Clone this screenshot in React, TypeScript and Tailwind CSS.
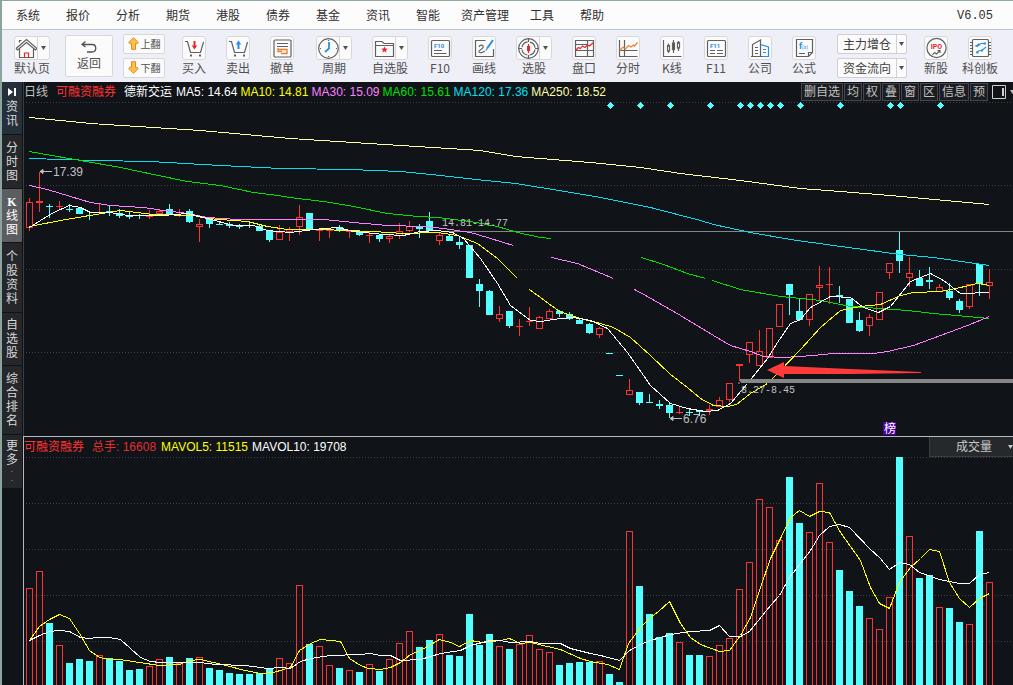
import { ReactNode } from 'react'

type Dir = 'r' | 'c'
// direction, high, body top, body bottom, low, volume top
type Bar = [Dir, number, number, number, number, number]

const RED = '#ff3232'
const CYAN = '#54ffff'

const bars: Bar[] = [
    ['r', 198, 202, 228, 231, 588], ['r', 172, 201, 203, 212, 571], ['c', 204, 206, 207, 218, 623], ['r', 201, 206, 207, 209, 645],
    ['c', 204, 209, 210, 212, 663], ['c', 208, 208, 214, 214, 659], ['c', 212, 215, 216, 220, 661], ['r', 203, 212, 213, 213, 655],
    ['c', 205, 211, 213, 216, 658], ['c', 209, 213, 216, 218, 661], ['c', 212, 215, 217, 219, 670], ['c', 214, 215, 216, 219, 669],
    ['r', 210, 216, 217, 219, 666], ['r', 209, 211, 214, 214, 659], ['c', 204, 209, 214, 214, 657], ['r', 209, 212, 213, 217, 663],
    ['c', 209, 211, 222, 223, 658], ['r', 219, 224, 227, 242, 657], ['c', 219, 219, 224, 228, 668], ['c', 222, 224, 225, 225, 670],
    ['c', 222, 224, 226, 228, 673], ['c', 224, 226, 227, 229, 674], ['c', 223, 225, 226, 228, 674], ['c', 224, 226, 231, 231, 673],
    ['c', 231, 231, 240, 242, 668], ['r', 225, 232, 240, 240, 658], ['r', 227, 229, 232, 241, 663], ['r', 205, 217, 227, 235, 585],
    ['c', 213, 213, 229, 229, 644], ['r', 229, 230, 231, 241, 646], ['r', 230, 230, 231, 238, 665], ['c', 225, 227, 231, 232, 668],
    ['r', 231, 231, 232, 238, 670], ['c', 231, 231, 235, 236, 672], ['r', 232, 235, 236, 243, 664], ['c', 235, 235, 239, 242, 671],
    ['r', 235, 236, 239, 243, 659], ['r', 223, 231, 236, 239, 643], ['r', 221, 226, 231, 232, 631], ['c', 224, 227, 229, 238, 647],
    ['c', 212, 221, 231, 231, 640], ['r', 233, 235, 241, 245, 634], ['c', 234, 236, 241, 241, 655], ['c', 236, 242, 245, 249, 656],
    ['c', 245, 245, 278, 278, 614], ['c', 279, 284, 291, 307, 645], ['c', 290, 291, 315, 315, 634], ['r', 306, 314, 319, 322, 646],
    ['c', 311, 311, 326, 328, 649], ['r', 319, 326, 327, 336, 644], ['r', 307, 321, 322, 326, 635], ['r', 316, 317, 329, 329, 649],
    ['r', 309, 311, 319, 319, 652], ['c', 310, 311, 314, 317, 665], ['c', 312, 314, 319, 320, 663], ['c', 318, 320, 324, 324, 662],
    ['c', 323, 324, 333, 334, 662], ['r', 327, 328, 335, 338, 661], ['c', 353, 353, 354, 354, 674], ['c', 375, 375, 376, 376, 682],
    ['r', 379, 390, 395, 395, 531], ['c', 392, 392, 403, 405, 586], ['c', 394, 402, 403, 403, 614], ['c', 400, 404, 406, 409, 637],
    ['c', 403, 405, 413, 418, 633], ['r', 407, 412, 413, 414, 642], ['c', 409, 412, 413, 416, 655], ['c', 410, 410, 412, 416, 655],
    ['r', 405, 409, 411, 415, 656], ['r', 397, 400, 407, 407, 645], ['r', 383, 383, 400, 402, 638], ['r', 364, 364, 366, 382, 589],
    ['r', 342, 342, 355, 363, 562], ['r', 330, 351, 366, 366, 499], ['r', 328, 328, 358, 358, 507], ['r', 304, 304, 327, 327, 540],
    ['c', 284, 284, 295, 315, 477], ['c', 299, 311, 320, 321, 523], ['r', 294, 294, 320, 326, 532], ['r', 266, 285, 288, 300, 483],
    ['r', 267, 284, 285, 304, 542], ['c', 286, 295, 297, 303, 570], ['c', 299, 299, 323, 323, 591], ['c', 312, 320, 331, 332, 606],
    ['r', 314, 317, 326, 336, 618], ['r', 292, 292, 320, 320, 629], ['r', 263, 263, 273, 279, 597], ['c', 232, 250, 261, 273, 457],
    ['r', 257, 273, 278, 287, 536], ['c', 270, 278, 286, 286, 578], ['c', 267, 280, 282, 289, 575], ['r', 284, 287, 292, 292, 607],
    ['c', 283, 291, 298, 300, 608], ['c', 299, 301, 310, 313, 622], ['r', 284, 284, 307, 309, 624], ['c', 264, 264, 284, 296, 531],
    ['r', 269, 282, 286, 299, 582],
]

const priceLines: { color: string; points: string }[] = [
    { color: '#ffffa8', points: '29,117 60,120 90,123 200,130 290,138 400,145 480,150 515,156 590,162 640,167 680,173 740,180 800,188 840,191 890,195 989,204' },
    { color: '#00e0f0', points: '29,158 95,160 150,161 220,165 280,168 350,169 400,171 440,175 485,180 515,183 540,187 600,197 650,207 700,220 713,224 750,232 790,239 833,245 900,254 933,257 989,265' },
    { color: '#00e000', points: '29,151 40,153 80,160 120,167 153,174 187,181 220,185 253,192 270,194 297,198 323,201 353,206 387,213 417,216 437,217 470,221 497,226 517,232 540,237 551,238' },
    { color: '#00e000', points: '641,257 663,264 687,273 705,278' },
    { color: '#00e000', points: '712,280 740,289 780,296 820,300 850,306 880,308 907,310 933,313 967,316 989,318' },
    { color: '#ff80ff', points: '29,185 47,189 70,196 90,202 110,205 143,207 163,210 187,213 207,217 237,219 323,219 353,222 387,225 423,226 443,228 470,232 487,237 503,242 513,245' },
    { color: '#ff80ff', points: '551,257 577,263 613,278' },
    { color: '#ff80ff', points: '634,289 647,296 680,315 713,335 730,345 750,351 763,356 783,357 813,355 833,353 873,353 887,351 913,345 940,335 967,325 989,316' },
    { color: '#ffff00', points: '29,226 60,220 90,215 120,210 153,214 193,215 207,218 220,219 247,221 267,226 287,229 320,229 373,231 403,233 437,232 457,235 477,243 497,258 517,278' },
    { color: '#ffff00', points: '529,289 559,311 580,318 600,323 613,327 630,337 650,355 670,374 687,387 700,398 713,405 727,406 736,404 750,393 767,383 780,370 800,349 820,327 840,310 860,306 880,304 900,295 913,292 940,291 960,287 977,283 989,285' },
    { color: '#ffffff', points: '29,227 40,220 53,212 69,205 80,207 90,212 110,212 127,215 163,215 187,213 207,218 233,225 253,225 267,230 290,232 313,229 337,227 353,231 383,234 403,235 420,231 437,230 452,232 463,238 480,258 497,283 510,305 530,320 540,321 560,318 573,317 590,320 607,328 627,352 650,385 670,403 687,408 705,411 717,410 730,403 747,383 767,358 777,342 790,323 800,319 810,307 830,296 850,297 863,307 878,312 890,306 910,281 930,273 943,280 960,293 989,292' },
]

const volumeLines = [
    { color: '#ffff00', points: '29,640 39,626 49,619 59,614 69,618 79,633 89,650 99,657 109,659 119,659 139,662 159,665 179,664 189,660 200,659 213,662 230,666 240,669 260,673 273,672 290,667 299,650 310,643 320,639 340,641 349,658 360,665 368,668 380,669 390,667 400,662 410,654 420,650 439,639 450,642 459,646 470,640 482,642 500,640 509,638 520,643 530,642 547,646 560,649 580,658 590,661 607,664 619,669 628,643 640,627 650,617 658,611 669,601 680,623 690,637 700,644 719,651 729,650 740,635 750,617 760,587 770,558 780,538 790,517 799,510 809,516 819,511 829,512 840,532 860,560 870,587 879,603 889,608 899,582 910,567 920,558 929,549 939,551 949,582 959,598 969,607 979,598 989,593' },
    { color: '#ffffff', points: '29,640 39,635 49,631 59,630 69,631 80,637 89,638 96,637 109,637 120,639 130,648 140,657 150,661 160,662 200,662 215,664 245,665 267,668 280,667 290,668 300,661 310,658 330,655 360,654 370,653 380,655 390,655 400,660 420,659 440,653 460,650 470,645 490,640 500,640 510,642 530,641 540,643 560,643 570,648 590,653 600,655 619,660 629,650 640,644 650,640 670,634 690,631 709,630 719,625 729,636 740,636 749,631 770,605 779,595 789,577 810,550 819,535 829,526 839,524 849,527 870,549 879,557 889,569 899,562 909,564 919,572 939,579 959,583 969,583 979,574 989,572' },
]

const diamonds = [610, 640, 670, 710, 740, 750, 760, 770, 780, 800, 840, 890, 900, 940]

const menus = ['系统', '报价', '分析', '期货', '港股', '债券', '基金', '资讯', '智能', '资产管理', '工具', '帮助']

const indicators = [
    { text: 'MA5: 14.64', color: 'text-white' },
    { text: 'MA10: 14.81', color: 'text-[#ffff00]' },
    { text: 'MA30: 15.09', color: 'text-[#ff80ff]' },
    { text: 'MA60: 15.61', color: 'text-[#00e000]' },
    { text: 'MA120: 17.36', color: 'text-[#00e0f0]' },
    { text: 'MA250: 18.52', color: 'text-[#ffffa8]' },
]

const sideTabs = [
    { text: '资讯', className: 'h-[52px] bg-[#26303b]', skip: true },
    { text: '分时图', className: 'h-[53px] bg-[#26272b]' },
    { text: 'K线图', className: "h-[53px] bg-[#5c5d61] text-white font-['Liberation_Serif','Noto_Sans_CJK_SC',serif]" },
    { text: '个股资料', className: 'h-[69px] bg-[#26272b]' },
    { text: '自选股', className: 'h-[52px] bg-[#26272b]' },
    { text: '综合排名', className: 'h-[68px] bg-[#26272b]' },
    { text: '更多··', className: 'h-[53px] bg-[#26272b]' },
]

const Icon = ({ children }: { children: ReactNode }) => (
    <svg viewBox="1 1 22 22" className="w-[22px] h-[22px]" fill="none" stroke="#606060" strokeWidth="1.2">
        {children}
    </svg>
)

const HomeIcon = () => (
    <Icon>
        <path d="M5.5 6.5V4.5H7.5M2 12.5 12.5 3.5 23 12.5 21.5 14 12.5 6.5 3.5 14 2 12.5M5.5 12.5V21.5H19.5V12.5" />
        <path d="M10.5 21.5V17H14.5V21.5" stroke="#e22" />
    </Icon>
)

const CartIcon = ({ up = false }: { up?: boolean }) => (
    <Icon>
        <path d="M3 5.5H5.5L8.5 16.5H18.5L21.5 6" />
        <path d="M8 19.5H10M17 19.5H19" strokeWidth="2" />
        {up
            ? <path d="M12.5 4.5 9.8 8.5H11.5V13H13.5V8.5H15.2Z" fill="#2a8de8" stroke="none" />
            : <path d="M12.5 13.5 9.8 9.5H11.5V5H13.5V9.5H15.2Z" fill="#e8252b" stroke="none" />}
    </Icon>
)

const CancelIcon = () => (
    <Icon>
        <rect x="4" y="4" width="17" height="17" rx="1" />
        <path d="M7 7.5H18M7 10.5H18" />
        <path d="M8 13.5H17V17.5H11M8 12V15.5H12" stroke="#f08030" strokeWidth="1.4" />
    </Icon>
)

const ClockIcon = () => (
    <Icon>
        <circle cx="12.5" cy="12.5" r="9.8" />
        <path d="M12.5 4V5M12.5 20V21M4 12.5H5M20 12.5H21" />
        <path d="M13 6V12.5L9 16" stroke="#2a8de8" strokeWidth="1.8" />
    </Icon>
)

const FolderIcon = () => (
    <Icon>
        <path d="M3.5 20.5V5.5H10L12 7.5H21.5V20.5ZM3.5 9.5H21.5" />
        <path d="M12.5 10.5 13.4 12.6 15.6 12.8 14 14.3 14.5 16.5 12.5 15.3 10.5 16.5 11 14.3 9.4 12.8 11.6 12.6Z" fill="#e8252b" stroke="none" />
    </Icon>
)

const FileIcon = ({ text, columns = false }: { text: string; columns?: boolean }) => (
    <Icon>
        <rect x="3.5" y="4.5" width="18" height="16" rx="1" />
        <text x="6" y="11.5" fontSize="6" fontWeight="bold" fontFamily="Roboto, sans-serif" fill="#2a8de8" stroke="none">{text}</text>
        {columns ? <path d="M6 14.5H11M13 14.5H19M6 17.5H11M13 17.5H19" /> : <path d="M6 14.5H14M6 17.5H18.5" />}
    </Icon>
)

const DrawIcon = () => (
    <Icon>
        <path d="M13.5 4.5H3.5V20.5H21.5V13" />
        <path d="M7 11C8 8.5 12 8.5 11 11.5 10 14 6.5 14 7 16 8 17.5 11 16.5 13 15" />
        <path d="M21 4 15 12.5" stroke="#2a8de8" strokeWidth="2" />
        <path d="M15 12.5 14 14.5" stroke="#2a8de8" />
    </Icon>
)

const TargetIcon = () => (
    <Icon>
        <circle cx="12.5" cy="12.5" r="9.8" />
        <circle cx="12.5" cy="12.5" r="6.6" strokeDasharray="8 2.4" strokeDashoffset="-1.2" />
        <path d="M12.5 2.5V6M12.5 19V22.5M2.5 12.5H6M19 12.5H22.5" />
        <path d="M12.5 8V17" stroke="#e8252b" />
        <rect x="11" y="10" width="3" height="5" fill="#e8252b" stroke="none" />
    </Icon>
)

const TapeIcon = () => (
    <Icon>
        <path d="M3.5 4.5H21.5V20.5H3.5ZM3.5 8.5H15.5M3.5 14.5H21.5M15.5 4.5V20.5" />
        <path d="M3.5 14.5 6.5 11.5 8.5 12.5 10.5 10 13 11.5 15.5 9 17.5 10 21.5 6.5" stroke="#e8252b" />
    </Icon>
)

const MinuteIcon = () => (
    <Icon>
        <path d="M3.5 4V20.5H21.5M8.5 4V20.5M3.5 14.5H21.5" />
        <path d="M4 14.5 7 11 9.5 13 12.5 9.5 15 11 17.5 9 18.5 10 21.5 6.5" stroke="#f08030" />
    </Icon>
)

const CandleIcon = () => (
    <Icon>
        <path d="M3.5 4V20.5H21.5M8.5 7.5V9.5M8.5 15V17M13.5 4V17M18.5 5V6.5M18.5 12V15" />
        <rect x="7.5" y="9.5" width="2" height="5.5" />
        <rect x="12.5" y="7" width="2" height="6.5" fill="#505050" />
        <rect x="17.5" y="6.5" width="2" height="5.5" />
    </Icon>
)

const CompanyIcon = () => (
    <Icon>
        <path d="M4.5 20.5V8.5L12.5 4V20.5M3 20.5H15M7 11.5H10M7 14.5H10M7 17.5H10" />
        <path d="M12.5 8.5 20.5 11V20.5H14.5M15 13.5H18M15 16.5H18" stroke="#2a8de8" />
    </Icon>
)

const FormulaIcon = () => (
    <Icon>
        <path d="M4.5 3.5H20.5V16.5L16.5 20.5H4.5ZM16.5 20.5V16.5H20.5M7 17.5H13" />
        <text x="7" y="13" fontSize="9" fontWeight="bold" fontFamily="Roboto, sans-serif" fill="#2a8de8" stroke="none">f</text>
        <text x="10" y="13" fontSize="5" fontFamily="Roboto, sans-serif" fill="#2a8de8" stroke="none">(x)</text>
    </Icon>
)

const IpoIcon = () => (
    <Icon>
        <circle cx="12.5" cy="12" r="9.6" />
        <rect x="5" y="7.5" width="15" height="7" fill="#fbfbfb" stroke="none" />
        <text x="12.5" y="13" textAnchor="middle" fontSize="7" fontWeight="bold" fontFamily="Roboto, sans-serif" fill="#e8252b" stroke="none">IPO</text>
        <path d="M8.5 19 10.5 16.5 12.5 18 16 14.5M13.5 14.5H16V17" />
    </Icon>
)

const ChipIcon = () => (
    <Icon>
        <rect x="4.5" y="3.5" width="16" height="17" rx="1" />
        <path d="M2 6.5H4.5M2 9.5H4.5M2 12.5H4.5M2 15.5H4.5M2 18.5H4.5M20.5 6.5H23M20.5 9.5H23M20.5 12.5H23M20.5 15.5H23M20.5 18.5H23" />
        <path d="M7 10 10 9.5 13 7.5 17 7.5M8 16.5 11.5 14.5H14L18 11" stroke="#2a8de8" />
        <path d="M8.5 10.5 11.5 8M15.5 7.5H18M8.5 16.5H10.5M13 14.5H15" stroke="#2a8de8" strokeWidth="2.2" />
    </Icon>
)

const Caret = ({ className = 'text-[#505050]' }: { className?: string }) => (
    <svg viewBox="0 0 5 4" className={`w-[5px] h-1 shrink-0 ${className}`} fill="currentColor">
        <path d="M0 0H5L2.5 4Z" />
    </svg>
)

const Tool = ({ id, label, split = false, children }: { id: string; label: string; split?: boolean; children: ReactNode }) => (
    <div className={`${split ? 'w-14' : 'w-11'} shrink-0 flex flex-col items-center`}>
        <div className="flex rounded-[3px] border border-[#d8d8dc] bg-[#fbfbfb]">
            <button id={id} className="w-[22px] h-[22px]">{children}</button>
            {split && (
                <button aria-label={`${label}选项`} className="w-3 flex items-center justify-center border-l border-[#d8d8dc]">
                    <Caret />
                </button>
            )}
        </div>
        <label htmlFor={id} className="text-xs leading-4 whitespace-nowrap">{label}</label>
    </div>
)

const PageButton = ({ label, down = false }: { label: string; down?: boolean }) => (
    <button className="w-[42px] h-5 flex items-center justify-center gap-0.5 rounded-[2px] border border-[#d8d8dc] bg-[#fbfbfb] text-[10px]">
        <svg viewBox="0 0 11 13" className="w-[11px] h-[13px]" fill="#ffc04a" stroke="#e08a1c">
            {down ? <path d="M5.5 12.3 10.3 7.5 9 6.3H7.5V.7H3.5V6.3H2L.7 7.5Z" /> : <path d="M5.5 .7 10.3 5.5 9 6.7H7.5V12.3H3.5V6.7H2L.7 5.5Z" />}
        </svg>
        {label}
    </button>
)

const Combo = ({ label }: { label: string }) => (
    <div className="relative w-[70px] h-5 flex rounded-[2px] border border-[#d0d0d4] bg-[#fbfbfb]">
        <select aria-label={label} className="w-full appearance-none bg-transparent pl-[5px] text-xs leading-4 text-[#404040]">
            <option>{label}</option>
        </select>
        <span className="absolute right-0 inset-y-0 w-[10px] flex items-center justify-center border-l border-[#d0d0d4] pointer-events-none">
            <Caret />
        </span>
    </div>
)

const Toolbar = () => (
    <div className="h-[52px] flex items-center bg-[#efeff7] pl-0.5 pb-px text-[#505050] font-['Noto_Sans_CJK_SC',sans-serif]">
        <Tool id="home" label="默认页" split><HomeIcon /></Tool>
        <button className="w-12 h-[42px] ml-[5px] shrink-0 flex flex-col items-center justify-center gap-0.5 rounded-[2px] border border-[#d8d8dc] bg-[#fbfbfb] text-xs leading-4">
            <svg viewBox="0 0 16 12" className="w-4 h-3" fill="none" stroke="#505050" strokeWidth="1.3">
                <path d="M4.5 .5 1 3.5 4.5 6M1 3.5H11C16 3.5 16 11 11 11H6" />
            </svg>
            返回
        </button>
        <div className="ml-[10px] mr-[7px] shrink-0 flex flex-col gap-1">
            <PageButton label="上翻" />
            <PageButton label="下翻" down />
        </div>
        <Tool id="buy" label="买入"><CartIcon /></Tool>
        <Tool id="sell" label="卖出"><CartIcon up /></Tool>
        <Tool id="cancel" label="撤单"><CancelIcon /></Tool>
        <div className="w-0.5 shrink-0" />
        <Tool id="period" label="周期" split><ClockIcon /></Tool>
        <Tool id="favorites" label="自选股" split><FolderIcon /></Tool>
        <Tool id="f10" label="F10"><FileIcon text="F10" /></Tool>
        <Tool id="draw" label="画线"><DrawIcon /></Tool>
        <Tool id="pick" label="选股" split><TargetIcon /></Tool>
        <Tool id="tape" label="盘口"><TapeIcon /></Tool>
        <Tool id="minute" label="分时"><MinuteIcon /></Tool>
        <Tool id="kline" label="K线"><CandleIcon /></Tool>
        <Tool id="f11" label="F11"><FileIcon text="F11" columns /></Tool>
        <Tool id="company" label="公司"><CompanyIcon /></Tool>
        <Tool id="formula" label="公式"><FormulaIcon /></Tool>
        <div className="ml-[11px] mr-[7px] shrink-0 flex flex-col gap-1">
            <Combo label="主力增仓" />
            <Combo label="资金流向" />
        </div>
        <Tool id="ipo" label="新股"><IpoIcon /></Tool>
        <Tool id="star" label="科创板"><ChipIcon /></Tool>
    </div>
)

const SideNav = () => (
    <nav className="w-5 shrink-0 flex flex-col gap-px">
        {sideTabs.map(({ text, className, skip }) => (
            <button key={text} className={`w-full flex flex-col items-center justify-center text-xs leading-[14px] text-[#d8d8d8] ${className}`}>
                {skip && (
                    <svg viewBox="0 0 8 8" className="w-2 h-2 mb-1" fill="#fff">
                        <path d="M0 0 5 4 0 8ZM6 0H8V8H6Z" />
                    </svg>
                )}
                {text.split('').map((char, i) => (
                    <span key={i} className={char === '·' ? 'text-[7px] leading-[9px]' : char === 'K' ? 'font-bold' : undefined}>{char}</span>
                ))}
            </button>
        ))}
    </nav>
)

const GridLines = ({ rows }: { rows: number[] }) => (
    <>
        {rows.map((y) => (
            <line key={y} x1="26" x2="1013" y1={y + 0.5} y2={y + 0.5} stroke="#3c4146" strokeDasharray="1 2" />
        ))}
    </>
)

const Lines = ({ items }: { items: { color: string; points: string }[] }) => (
    <g fill="none" transform="translate(.5 .5)">
        {items.map(({ color, points }) => <polyline key={points} points={points} stroke={color} />)}
    </g>
)

const Candle = ({ bar: [dir, high, top, bottom, low], x }: { bar: Bar; x: number }) => {
    const color = dir === 'r' ? RED : CYAN
    const hollow = dir === 'r' && bottom - top > 1
    return (
        <g fill={color}>
            <rect x={x} y={high} width="1" height={Math.max(top - high, 0)} />
            <rect x={x} y={bottom} width="1" height={Math.max(low - bottom, 0)} />
            {hollow
                ? <rect x={x - 2.5} y={top + 0.5} width="6" height={bottom - top - 1} fill="none" stroke={color} />
                : <rect x={x - 3} y={top} width="7" height={bottom - top} />}
        </g>
    )
}

const PriceChart = () => (
    <svg viewBox="24 102 989 334" className="block w-full h-auto" shapeRendering="crispEdges">
        <GridLines rows={[102, 185, 269, 352]} />
        <rect x="446" y="231" width="567" height="1" fill="#868686" />
        {bars.map((bar, i) => <Candle key={i} bar={bar} x={29 + i * 10} />)}
        <Lines items={priceLines} />
        <rect x="740" y="379" width="273" height="4" fill="#868686" />
        {diamonds.map((x) => <path key={x} d={`M${x} 105.5l3.5-3.5 3.5 3.5-3.5 3.5z`} transform="translate(-3 0)" fill={CYAN} />)}
        <g shapeRendering="auto">
            <path d="M767 370 784 362V366L850 369 921 372V373L850 374H784V378Z" fill="#ff3a3a" />
            <circle cx="739" cy="383" r="1.5" stroke="#000" fill="#868686" />
            <path d="M40 171.5H52M43 169.5 40 171.5 43 173.5Z" stroke="#c0c0c0" fill="#c0c0c0" />
            <path d="M670 418.5H682M673 416.5 670 418.5 673 420.5Z" stroke="#c0c0c0" fill="#c0c0c0" />
        </g>
        <g fill="#c0c0c0" fontSize="12" fontFamily="'Liberation Sans', sans-serif">
            <text x="53" y="176">17.39</text>
            <text x="683" y="423">6.76</text>
        </g>
        <g fill="#c0c0c0" fontSize="10" fontFamily="'Liberation Mono', monospace">
            <text x="442" y="226">14.81-14.77</text>
            <text x="741" y="393">8.27-8.45</text>
        </g>
        <rect x="883" y="422" width="13" height="13" fill="#4a00a0" />
        <text x="884" y="433" fill="#fff" fontSize="12" fontFamily="'Noto Sans CJK SC', sans-serif">榜</text>
    </svg>
)

const VolumeChart = () => (
    <svg viewBox="24 457 989 228" className="block w-full h-auto" shapeRendering="crispEdges">
        <GridLines rows={[457, 503, 549, 595, 641]} />
        {bars.map(([dir, , , , , top], i) => {
            const x = 26 + i * 10
            return dir === 'r'
                ? <rect key={i} x={x + 0.5} y={top + 0.5} width="6" height={690 - top} fill="none" stroke={RED} />
                : <rect key={i} x={x} y={top} width="7" height={685 - top} fill={CYAN} />
        })}
        <Lines items={volumeLines} />
    </svg>
)

const ChartHeader = () => (
    <div className="h-5 flex items-center text-xs leading-4 whitespace-nowrap overflow-hidden">
        <span className="text-[#c0c0c0]">日线</span>
        <span className="ml-2 text-[#ff3232]">可融资融券</span>
        <span className="ml-2 mr-1 text-white">德新交运</span>
        <div className="flex gap-[3px]">
            {indicators.map(({ text, color }) => <span key={text} className={color}>{text}</span>)}
        </div>
        <div className="ml-auto flex gap-px text-[#c0c0c0]">
            {['删自选', '均', '权', '叠', '窗', '区', '信息', '预'].map((text) => (
                <button key={text} className="h-[18px] px-0.5 border border-[#46474c] bg-[#1c1d22]">{text}</button>
            ))}
            <button aria-label="侧栏" className="w-5 flex items-center justify-center">
                <svg viewBox="0 0 14 14" className="w-3.5 h-3.5" fill="none" stroke="#d0d0d0">
                    <path d="M.5 .5H13.5V13.5H.5Z" />
                    <path d="M11 3V11" strokeWidth="2" />
                </svg>
            </button>
            <button aria-label="更多工具" className="w-[3px] flex items-center"><Caret className="text-[#c0c0c0]" /></button>
        </div>
    </div>
)

const VolumeHeader = () => (
    <div className="h-5 flex items-center text-xs leading-4 whitespace-nowrap">
        <span className="text-[#ff3232]">可融资融券</span>
        <span className="ml-2 text-[#e03030]">总手: 16608</span>
        <span className="ml-[5px] text-[#ffff00]">MAVOL5: 11515</span>
        <span className="ml-1 text-white">MAVOL10: 19708</span>
        <button className="w-[84px] h-5 ml-auto flex items-center justify-end border-l border-b border-[#3c3d40] bg-[#26292c] text-[#c8c8c8]">
            <span className="mr-4">成交量</span>
            <Caret className="text-[#c8c8c8]" />
        </button>
    </div>
)

const App = () => {
    return (
        <div className="min-h-screen flex flex-col bg-[#101318] font-['Liberation_Sans','Noto_Sans_CJK_SC',sans-serif]">
            <div className="border-l-2 border-[#8ba4a0]">
                <div className="h-[30px] flex items-center border-t border-b border-t-[#8fa8a0] border-b-[#b8c8cc] bg-[#fcfcfc] pl-px pr-5 pt-0.5 text-xs text-[#303030]">
                    <nav className="flex">
                        {menus.map((menu) => <button key={menu} className="min-w-[50px] px-2 whitespace-nowrap">{menu}</button>)}
                    </nav>
                    <span className="ml-auto font-['Liberation_Mono',monospace]">V6.05</span>
                </div>
                <Toolbar />
            </div>
            <div className="grow flex border-l-2 border-[#8ba4a0]">
                <SideNav />
                <main className="grow min-w-0 flex flex-col">
                    <section className="ml-px border-l border-[#3a3d42]">
                        <ChartHeader />
                        <PriceChart />
                    </section>
                    <section className="ml-px grow border-l border-t border-[#b8b8c0]">
                        <VolumeHeader />
                        <VolumeChart />
                    </section>
                </main>
            </div>
        </div>
    )
}

export default App
